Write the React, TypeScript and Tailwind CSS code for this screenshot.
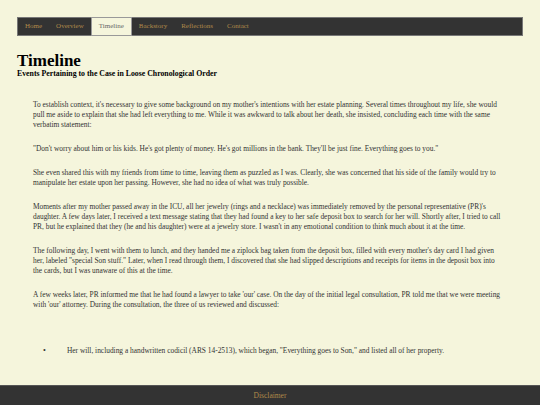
import React from 'react';

const navItems = ['Home', 'Overview', 'Timeline', 'Backstory', 'Reflections', 'Contact'];

const paragraphs = [
    "To establish context, it's necessary to give some background on my mother's intentions with her estate planning. Several times throughout my life, she would pull me aside to explain that she had left everything to me. While it was awkward to talk about her death, she insisted, concluding each time with the same verbatim statement:",
    "\"Don't worry about him or his kids. He's got plenty of money. He's got millions in the bank. They'll be just fine. Everything goes to you.\"",
    "She even shared this with my friends from time to time, leaving them as puzzled as I was. Clearly, she was concerned that his side of the family would try to manipulate her estate upon her passing. However, she had no idea of what was truly possible.",
    "Moments after my mother passed away in the ICU, all her jewelry (rings and a necklace) was immediately removed by the personal representative (PR)'s daughter. A few days later, I received a text message stating that they had found a key to her safe deposit box to search for her will. Shortly after, I tried to call PR, but he explained that they (he and his daughter) were at a jewelry store. I wasn't in any emotional condition to think much about it at the time.",
    "The following day, I went with them to lunch, and they handed me a ziplock bag taken from the deposit box, filled with every mother's day card I had given her, labeled \"special Son stuff.\" Later, when I read through them, I discovered that she had slipped descriptions and receipts for items in the deposit box into the cards, but I was unaware of this at the time.",
    "A few weeks later, PR informed me that he had found a lawyer to take 'our' case. On the day of the initial legal consultation, PR told me that we were meeting with 'our' attorney. During the consultation, the three of us reviewed and discussed:",
];

export default function App() {
    return (
        <div className="h-screen flex flex-col bg-[#f5f5dc] text-[#333] [font-family:'Liberation_Serif','Times_New_Roman',serif] overflow-hidden">
            <main className="flex-1 overflow-hidden px-[17px] pt-[17px]">
                {/* top nav */}
                <nav className="h-[19px] bg-[#333] border border-[#777] flex items-stretch">
                    {navItems.map((item) => (
                        <a
                            key={item}
                            href="#"
                            className={
                                item === 'Timeline'
                                    ? 'px-[7px] flex items-center text-[7px] text-[#666] bg-[#f5f5dc] border border-[#999] -my-px'
                                    : 'px-[7px] flex items-center text-[7px] text-[#b08a4a]'
                            }
                        >
                            {item}
                        </a>
                    ))}
                </nav>

                <h1 className="mt-[16px] text-[17px] leading-[17px] font-bold text-black">Timeline</h1>
                <h2 className="text-[7.8px] leading-[9px] font-bold text-black">Events Pertaining to the Case in Loose Chronological Order</h2>

                <section className="mt-[22px] pl-[16px] w-[486px] text-[7.4px] leading-[10px] text-[#333]">
                    {paragraphs.map((p, i) => (
                        <p key={i} className="mb-[14px]">{p}</p>
                    ))}
                    <ul className="mt-[36px] pl-[10px]">
                        <li className="flex">
                            <span className="w-[24px] shrink-0 text-[8px] leading-[10px]">•</span>
                            <span>Her will, including a handwritten codicil (ARS 14-2513), which began, "Everything goes to Son," and listed all of her property.</span>
                        </li>
                    </ul>
                </section>
            </main>

            <footer className="h-[20px] shrink-0 bg-[#333] border-t border-[#555] flex items-center justify-center">
                <span className="text-[7.5px] text-[#b08a4a]">Disclaimer</span>
            </footer>
        </div>
    );
}
